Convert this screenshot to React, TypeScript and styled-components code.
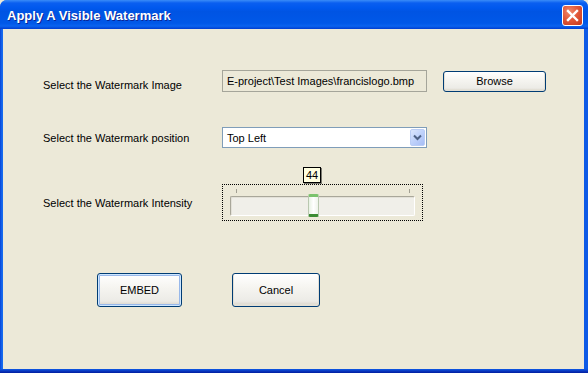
import React from 'react';
import styled, { createGlobalStyle } from 'styled-components';

const Global = createGlobalStyle`
  html, body { margin: 0; padding: 0; width: 588px; height: 373px; overflow: hidden; background: #ece9d8; }
  * { box-sizing: border-box; }
`;

const UI_FONT = `"Liberation Sans", "DejaVu Sans", sans-serif`;

const Window = styled.div`
  width: 588px;
  height: 373px;
  display: flex;
  flex-direction: column;
  padding: 0 4px 4px 3px;
  background: linear-gradient(to right, #0843d6 0px, #166aee 2px, #0d5ae6 100%);
  border-radius: 7px 7px 0 0;
  overflow: hidden;
  position: relative;
  &::after {
    content: '';
    position: absolute;
    left: 0; right: 0; bottom: 0; height: 4px;
    background: linear-gradient(to bottom, #0d5ae6, #0831b8 60%, #001ea0);
  }
`;

const TitleBar = styled.div`
  height: 29px;
  flex: none;
  margin: 0 -4px 0 -3px;
  display: flex;
  align-items: center;
  justify-content: space-between;
  padding: 0 5px 0 7px;
  background: linear-gradient(to bottom, #3a8cf8 0px, #0a5ff0 3px, #0058ee 8px, #0054e3 40%, #0058e8 80%, #0a63ef 90%, #003dd0 100%);
`;

const Title = styled.span`
  font-family: ${UI_FONT};
  font-weight: bold;
  font-size: 13px;
  color: #fff;
  text-shadow: 1px 1px 0 #0b2596;
  margin-top: 2px;
`;

const CloseButton = styled.div`
  width: 21px;
  height: 21px;
  margin-top: 2px;
  border: 1px solid #fff;
  border-radius: 3px;
  background: radial-gradient(circle at 35% 30%, #f08a6c 0%, #e2593a 45%, #c2351b 100%);
  display: flex;
  align-items: center;
  justify-content: center;
`;

const Body = styled.div`
  flex: 1;
  background: #ece9d8;
  padding: 41px 0 0 40px;
  display: flex;
  flex-direction: column;
`;

const Row = styled.div<{ $top?: number }>`
  display: flex;
  align-items: center;
  margin-top: ${p => p.$top ?? 0}px;
`;

const Label = styled.div<{ $shift?: number }>`
  width: 179px;
  font-family: ${UI_FONT};
  font-size: 11px;
  color: #000;
  position: relative;
  top: ${p => p.$shift ?? 0}px;
`;

const Field = styled.div`
  width: 205px;
  height: 22px;
  border: 1px solid #a5a59a;
  background: #ece9d8;
  font-family: ${UI_FONT};
  font-size: 11px;
  color: #000;
  display: flex;
  align-items: center;
  padding-left: 4px;
  white-space: nowrap;
  overflow: hidden;
`;

const Button = styled.button<{ $w: number; $h: number; $default?: boolean }>`
  width: ${p => p.$w}px;
  height: ${p => p.$h}px;
  border: 1px solid #003c74;
  border-radius: 3px;
  background: linear-gradient(to bottom, #ffffff 0%, #f6f5f1 40%, #ecebe6 85%, #d6d0c5 100%);
  box-shadow: ${p => (p.$default ? 'inset 0 0 0 1px #cee7ff, inset 0 0 0 2px #98b8ea' : 'inset 0 -1px 0 1px #e3e0d6')};
  font-family: ${UI_FONT};
  font-size: 11px;
  color: #000;
  padding: 0;
`;

const Select = styled.div`
  width: 205px;
  height: 21px;
  border: 1px solid #7f9db9;
  background: #fff;
  display: flex;
  align-items: stretch;
  padding: 1px;
`;

const SelectText = styled.div`
  flex: 1;
  display: flex;
  align-items: center;
  padding-left: 3px;
  font-family: ${UI_FONT};
  font-size: 11px;
  color: #000;
`;

const Arrow = styled.div`
  width: 15px;
  border: 1px solid #bacdf5;
  border-radius: 2px;
  background: linear-gradient(135deg, #dbe6fd 0%, #c1d3fb 45%, #a6bdf5 100%);
  display: flex;
  align-items: center;
  justify-content: center;
`;

const SliderBox = styled.div`
  position: relative;
  width: 201px;
  height: 37px;
  border: 1px dotted #000;
  padding: 11px 8px 0 7px;
`;

const Track = styled.div`
  width: 185px;
  height: 20px;
  border: 1px solid #a9a79a;
  border-right-color: #fff;
  border-bottom-color: #fff;
  border-radius: 2px;
  background: #f0efe9;
  box-shadow: inset 1px 1px 0 #e3e1d8;
`;

const Tick = styled.div<{ $x: number }>`
  position: absolute;
  left: ${p => p.$x}px;
  top: 4px;
  width: 1px;
  height: 4px;
  background: #a19f92;
`;

const Thumb = styled.div`
  position: absolute;
  left: 85px;
  top: 9px;
  width: 11px;
  height: 23px;
  border-radius: 2px;
  background: linear-gradient(to right, #e8f2e4 0%, #ffffff 50%, #eef3ea 100%);
  border: 1px solid #b9c8b0;
  border-top: 3px solid #7bc36d;
  border-bottom: 3px solid #3c8c34;
`;

const Tip = styled.div`
  position: absolute;
  left: 80px;
  top: -18px;
  width: 18px;
  height: 16px;
  border: 1px solid #000;
  background: #ffffe1;
  box-shadow: 1px 1px 0 #7a7a70;
  font-family: ${UI_FONT};
  font-size: 11px;
  display: flex;
  align-items: center;
  justify-content: center;
`;

const Actions = styled.div`
  display: flex;
  gap: 50px;
  margin: 52px 0 0 54px;
`;

export default function App() {
  return (
    <>
      <Global />
      <Window>
        <TitleBar>
          <Title>Apply A Visible Watermark</Title>
          <CloseButton>
            <svg width="13" height="13" viewBox="0 0 13 13">
              <path d="M2 2 L11 11 M11 2 L2 11" stroke="#fff" strokeWidth="2.4" strokeLinecap="square" />
            </svg>
          </CloseButton>
        </TitleBar>
        <Body>
          <Row>
            <Label $shift={4}>Select the Watermark Image</Label>
            <Field>E-project\Test Images\francislogo.bmp</Field>
            <Button $w={103} $h={21} style={{ marginLeft: 16 }}>Browse</Button>
          </Row>
          <Row $top={35}>
            <Label>Select the Watermark position</Label>
            <Select>
              <SelectText>Top Left</SelectText>
              <Arrow>
                <svg width="9" height="7" viewBox="0 0 9 7">
                  <path d="M1 1.5 L4.5 5 L8 1.5" stroke="#4d6185" strokeWidth="2" fill="none" />
                </svg>
              </Arrow>
            </Select>
          </Row>
          <Row $top={36}>
            <Label>Select the Watermark Intensity</Label>
            <SliderBox>
              <Tip>44</Tip>
              <Tick $x={13} />
              <Tick $x={186} />
              <Track />
              <Thumb />
            </SliderBox>
          </Row>
          <Actions>
            <Button $w={85} $h={34} $default>EMBED</Button>
            <Button $w={88} $h={34}>Cancel</Button>
          </Actions>
        </Body>
      </Window>
    </>
  );
}
